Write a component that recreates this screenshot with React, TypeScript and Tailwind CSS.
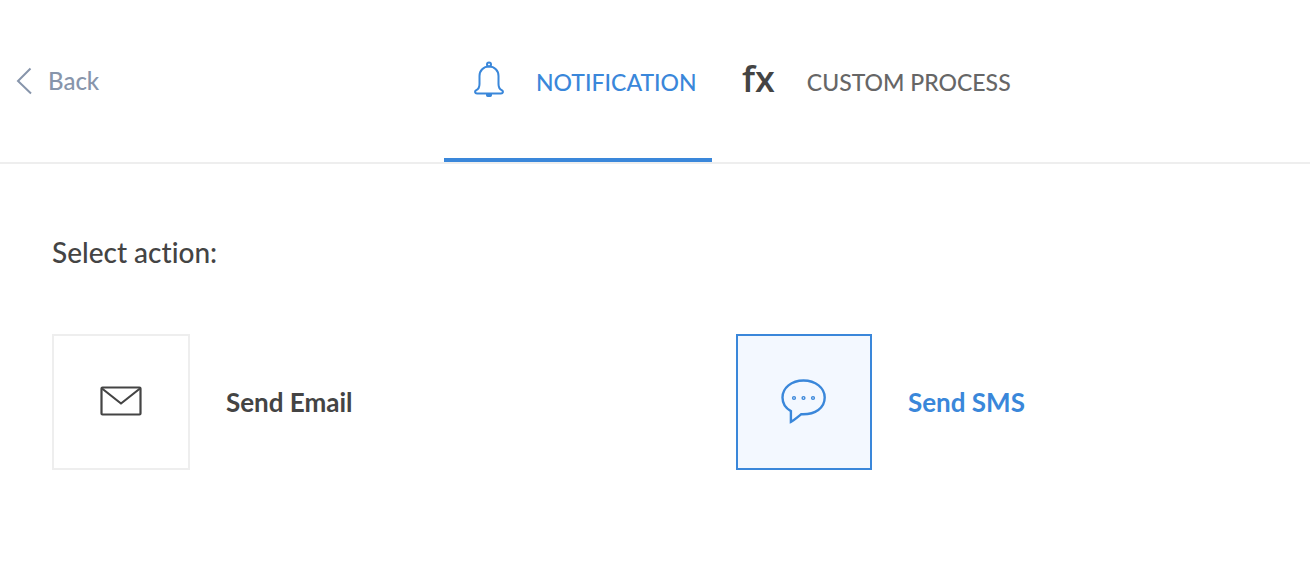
import { useState } from "react";
import clsx from "clsx";

function BackIcon() {
  return (
    <svg className="w-4 h-7" viewBox="0 0 16 28" fill="none" stroke="currentColor" strokeWidth="2">
      <path d="M14.5 1.5 2 14l13 12.5" />
    </svg>
  );
}

function BellIcon() {
  return (
    <svg className="w-[30px] h-9 shrink-0" viewBox="0 0 30 36" fill="none" stroke="currentColor" strokeWidth="2">
      <circle cx="15" cy="3.5" r="2" />
      <path d="M15 5.5C9.5 5.5 5.5 9.500 5.500 15v8c0 3.500-1.200 5.200-3.200 6.200-1.900 1-1.500 3.300.7 3.300h24c2.200 0 2.600-2.300.7-3.300-2-1-3.200-2.700-3.200-6.200v-8c0-5.500-4-9.500-9.500-9.500Z" />
      <path d="M13 33h4v1.200a1 1 0 0 1-1 .8h-2a1 1 0 0 1-1-.8Z" fill="currentColor" />
    </svg>
  );
}

function MailIcon() {
  return (
    <svg className="w-[42px] h-8" viewBox="0 0 42 32" fill="none" stroke="currentColor" strokeWidth="2.200" strokeLinejoin="round">
      <rect x="1.500" y="1.500" width="39" height="27" rx="1" />
      <path d="M2 2.500l19 15 19-15" />
    </svg>
  );
}

function SmsIcon() {
  return (
    <svg className="w-[46px] h-[46px]" viewBox="0 0 46 46" fill="none" stroke="currentColor" strokeWidth="2.400">
      <path d="M22.500 1.500C10.500 1.500 1.500 8.900 1.500 18.500c0 6 3.200 10.700 8.400 13.600v10.700c3.600-1.700 6.300-4.500 10.300-7.600C34.500 35.800 43.700 28.800 43.700 18.500 43.700 8.900 34.500 1.500 22.500 1.500Z" />
      <g strokeWidth="1.400">
        <circle cx="13" cy="19" r="1.400" />
        <circle cx="22.500" cy="19" r="1.400" />
        <circle cx="32" cy="19" r="1.400" />
      </g>
    </svg>
  );
}

const ACTIONS = [
  { id: "email", label: "Send Email", Icon: MailIcon },
  { id: "sms", label: "Send SMS", Icon: SmsIcon },
];

export default function App() {
  const [tab, setTab] = useState("notification");
  const [action, setAction] = useState("sms");

  const tabClass = (id: string) =>
    clsx(
      "flex items-center gap-8 border-b-4 pl-[30px] text-[23px] whitespace-nowrap",
      tab === id ? "border-[#3a87da] text-[#3a87da]" : "border-transparent text-[#666]"
    );

  return (
    <div className="min-h-screen bg-white font-['Lato',sans-serif] text-2xl font-medium text-[#444] [font-variant-ligatures:none]">
      {/* Header */}
      <header className="flex h-[164px] border-b-2 border-[#eee]">
        <div className="flex w-[444px] items-center px-4">
          <button type="button" className="flex items-center gap-4 text-[#8795ab]">
            <BackIcon />
            Back
          </button>
        </div>
        <nav className="flex">
          <button type="button" className={clsx(tabClass("notification"), "w-[268px]")} onClick={() => setTab("notification")}>
            <BellIcon />
            <span className="pt-1.5">NOTIFICATION</span>
          </button>
          <button type="button" className={clsx(tabClass("custom"), "pr-[30px]")} onClick={() => setTab("custom")}>
            <span className="font-['Open_Sans',sans-serif] text-4xl font-semibold text-[#444]">fx</span>
            <span className="pt-1.5">CUSTOM PROCESS</span>
          </button>
        </nav>
      </header>

      {/* Actions */}
      <main className="px-[52px] pt-[68px]">
        <h1 className="text-[28px] leading-10">Select action:</h1>
        <div className="mt-[62px] grid grid-cols-2 gap-[162px]">
          {ACTIONS.map(({ id, label, Icon }) => (
            <button
              key={id}
              type="button"
              aria-pressed={action === id}
              className={clsx("flex items-center gap-9 text-[26px] font-bold", action === id && "text-[#3a87da]")}
              onClick={() => setAction(id)}
            >
              <span
                className={clsx(
                  "flex h-[136px] items-center justify-center border-2",
                  action === id ? "w-[136px] border-[#3a87da] bg-[#f3f8ff]" : "w-[138px] border-[#eee]"
                )}
              >
                <Icon />
              </span>
              {label}
            </button>
          ))}
        </div>
      </main>
    </div>
  );
}
